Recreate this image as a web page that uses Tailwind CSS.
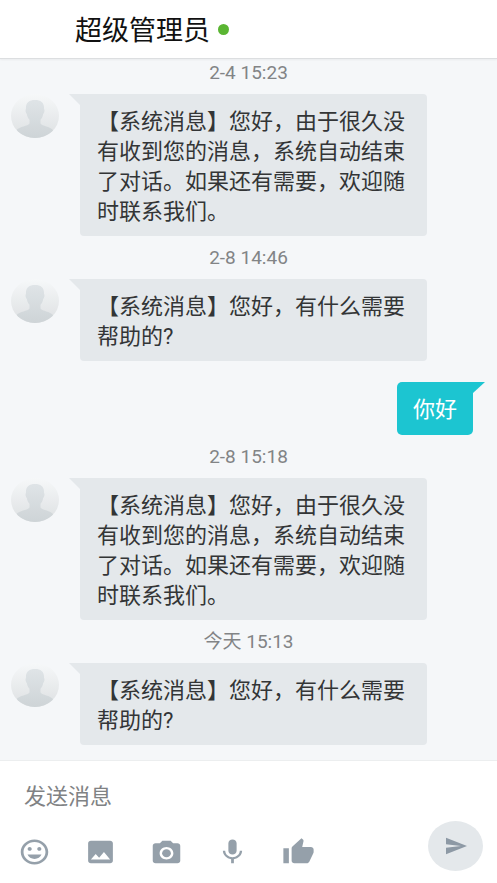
<!DOCTYPE html>
<html lang="zh-CN">
<head>
<meta charset="utf-8">
<meta name="viewport" content="width=device-width, initial-scale=1">
<title>超级管理员</title>
<script src="https://cdn.jsdelivr.net/npm/@tailwindcss/browser@4"></script>
</head>
<body class="flex min-h-screen flex-col bg-[#f5f7f9] font-['Roboto','Noto_Sans_CJK_SC',sans-serif] text-[22px] leading-[30px] text-[#333536]">
<svg class="absolute size-0" aria-hidden="true">
  <defs>
    <linearGradient id="disc" x1="0" y1="0" x2="0" y2="1"><stop offset="0" stop-color="#f6f8f9"/><stop offset="1" stop-color="#dde0e2"/></linearGradient>
    <linearGradient id="person" x1="0" y1="0" x2="0" y2="1"><stop offset="0" stop-color="#dfe4e7"/><stop offset="1" stop-color="#cdd3d6"/></linearGradient>
    <clipPath id="round"><ellipse cx="24" cy="22" rx="24" ry="22"/></clipPath>
  </defs>
  <symbol id="avatar" viewBox="0 0 48 44" preserveAspectRatio="none">
    <ellipse cx="24" cy="22" rx="24" ry="22" fill="url(#disc)"/>
    <path clip-path="url(#round)" fill="url(#person)" d="M24 6c6 0 9.500 3 9 9 .8.600.6 3.500-.8 5-.5 3-1.500 4.500-2.700 5.800v3.700c2 3 9 2.500 13 7V46H5v-9.500c4-4.500 11.500-4 13.500-7v-3.700c-1.200-1.300-2.200-2.800-2.700-5.800-1.400-1.500-1.600-4.400-.8-5-.5-6 3-9 9-9z"/>
  </symbol>
</svg>

<header class="flex h-[59px] items-center gap-2 border-b border-[#dcdee0] bg-white pl-[75px] shadow-xs">
  <h1 class="pt-1 text-[27px] leading-[40px] text-[#111]">超级管理员</h1>
  <span class="size-[11px] rounded-full bg-[#5ab532]" role="img" aria-label="在线"></span>
</header>

<main class="flex-1 pb-[14px]">
  <time class="mb-[7px] block text-center text-[19px] leading-[28px] text-[#828486]">2-4 15:23</time>
  <article class="flex items-start pr-[70px] pl-[11px]">
    <svg class="h-[44px] w-[48px] shrink-0" role="img" aria-label="头像"><use href="#avatar"/></svg>
    <svg class="ml-[10px] h-[11px] w-[11px] shrink-0" viewBox="0 0 11 11" aria-hidden="true"><path fill="#e4e8eb" d="M0 0h11v11z"/></svg>
    <p class="flex-1 rounded-[4px] rounded-tl-none bg-[#e4e8eb] px-[17px] pt-[13px] pb-[9px]">【系统消息】您好，由于很久没有收到您的消息，系统自动结束了对话。如果还有需要，欢迎随时联系我们。</p>
  </article>

  <time class="mt-2 mb-[7px] block text-center text-[19px] leading-[28px] text-[#828486]">2-8 14:46</time>
  <article class="flex items-start pr-[70px] pl-[11px]">
    <svg class="h-[44px] w-[48px] shrink-0" role="img" aria-label="头像"><use href="#avatar"/></svg>
    <svg class="ml-[10px] h-[11px] w-[11px] shrink-0" viewBox="0 0 11 11" aria-hidden="true"><path fill="#e4e8eb" d="M0 0h11v11z"/></svg>
    <p class="flex-1 rounded-[4px] rounded-tl-none bg-[#e4e8eb] px-[17px] pt-[13px] pb-[9px]">【系统消息】您好，有什么需要帮助的?</p>
  </article>

  <article class="mt-[21px] flex items-start justify-end pr-3">
    <p class="rounded-[5px] rounded-tr-none bg-[#1cc5d1] px-[16px] pt-[13px] pb-[10px] text-white">你好</p>
    <svg class="h-[11px] w-[12px] shrink-0" viewBox="0 0 12 11" preserveAspectRatio="none" aria-hidden="true"><path fill="#1cc5d1" d="M0 0h12L0 11z"/></svg>
  </article>

  <time class="mt-2 mb-[7px] block text-center text-[19px] leading-[28px] text-[#828486]">2-8 15:18</time>
  <article class="flex items-start pr-[70px] pl-[11px]">
    <svg class="h-[44px] w-[48px] shrink-0" role="img" aria-label="头像"><use href="#avatar"/></svg>
    <svg class="ml-[10px] h-[11px] w-[11px] shrink-0" viewBox="0 0 11 11" aria-hidden="true"><path fill="#e4e8eb" d="M0 0h11v11z"/></svg>
    <p class="flex-1 rounded-[4px] rounded-tl-none bg-[#e4e8eb] px-[17px] pt-[13px] pb-[9px]">【系统消息】您好，由于很久没有收到您的消息，系统自动结束了对话。如果还有需要，欢迎随时联系我们。</p>
  </article>

  <time class="mt-2 mb-[7px] block text-center text-[19px] leading-[28px] text-[#828486]">今天 15:13</time>
  <article class="flex items-start pr-[70px] pl-[11px]">
    <svg class="h-[44px] w-[48px] shrink-0" role="img" aria-label="头像"><use href="#avatar"/></svg>
    <svg class="ml-[10px] h-[11px] w-[11px] shrink-0" viewBox="0 0 11 11" aria-hidden="true"><path fill="#e4e8eb" d="M0 0h11v11z"/></svg>
    <p class="flex-1 rounded-[4px] rounded-tl-none bg-[#e4e8eb] px-[17px] pt-[13px] pb-[9px]">【系统消息】您好，有什么需要帮助的?</p>
  </article>
</main>

<form class="border-t border-[#eceeef] bg-white pt-[21px] pb-[12px]">
  <input class="block h-[30px] w-full px-6 outline-none placeholder:text-[#808284]" type="text" aria-label="发送消息" placeholder="发送消息">
  <div class="mt-[9px] flex items-center justify-between pr-[14px] pl-[18px]">
    <div class="mt-3 flex gap-[33px] text-[#95a0aa]">
      <button type="button" aria-label="表情"><svg class="h-[30px] w-[33px]" viewBox="0 0 24 24" preserveAspectRatio="none" fill="currentColor"><path d="M11.990 2C6.470 2 2 6.480 2 12s4.470 10 9.990 10C17.520 22 22 17.520 22 12S17.520 2 11.990 2zM12 20c-4.420 0-8-3.580-8-8s3.580-8 8-8 8 3.580 8 8-3.580 8-8 8zm3.500-9c.83 0 1.500-.67 1.500-1.500S16.330 8 15.500 8 14 8.670 14 9.500s.67 1.500 1.500 1.500zm-7 0c.83 0 1.500-.67 1.500-1.500S9.330 8 8.500 8 7 8.670 7 9.500 7.670 11 8.500 11zm3.500 6.500c2.330 0 4.310-1.460 5.110-3.500H6.890c.8 2.040 2.780 3.500 5.110 3.500z"/></svg></button>
      <button type="button" aria-label="图片"><svg class="h-[30px] w-[33px]" viewBox="0 0 24 24" preserveAspectRatio="none" fill="currentColor"><path d="M21 19V5c0-1.100-.9-2-2-2H5c-1.100 0-2 .9-2 2v14c0 1.100.9 2 2 2h14c1.100 0 2-.9 2-2zM8.500 13.500l2.500 3.010L14.500 12l4.500 6H5l3.500-4.500z"/></svg></button>
      <button type="button" aria-label="拍照"><svg class="h-[30px] w-[33px]" viewBox="0 0 24 24" preserveAspectRatio="none" fill="currentColor"><circle cx="12" cy="13" r="3.200"/><path fill-rule="evenodd" d="M9 3 7.170 5H4c-1.100 0-2 .9-2 2v12c0 1.100.9 2 2 2h16c1.100 0 2-.9 2-2V7c0-1.100-.9-2-2-2h-3.170L15 3H9zm3 15c-2.760 0-5-2.240-5-5s2.240-5 5-5 5 2.240 5 5-2.240 5-5 5z"/></svg></button>
      <button type="button" aria-label="语音"><svg class="h-[30px] w-[33px]" viewBox="0 0 24 24" preserveAspectRatio="none" fill="currentColor"><path d="M12 14c1.660 0 2.990-1.340 2.990-3L15 5c0-1.660-1.340-3-3-3S9 3.340 9 5v6c0 1.660 1.340 3 3 3zm5.300-3c0 3-2.540 5.100-5.300 5.100S6.700 14 6.700 11H5c0 3.410 2.720 6.230 6 6.720V21h2v-3.280c3.280-.48 6-3.300 6-6.720h-1.700z"/></svg></button>
      <button type="button" aria-label="点赞"><svg class="h-[30px] w-[33px]" viewBox="0 0 24 24" preserveAspectRatio="none" fill="currentColor"><path d="M1 21h4V9H1v12zm22-11c0-1.100-.9-2-2-2h-6.310l.95-4.570.03-.32c0-.41-.17-.79-.44-1.060L14.170 1 7.590 7.590C7.220 7.950 7 8.450 7 9v10c0 1.100.9 2 2 2h9c.83 0 1.540-.5 1.840-1.220l3.020-7.050c.09-.23.14-.47.14-.73v-2z"/></svg></button>
    </div>
    <button class="flex h-[50px] w-[55px] items-center justify-center rounded-[50%] bg-[#e4e8eb] text-[#8d99a5]" type="submit" aria-label="发送"><svg class="h-[22px] w-[24px]" viewBox="0 0 24 24" preserveAspectRatio="none" fill="currentColor"><path d="M2.010 21L23 12 2.010 3 2 10l15 2-15 2z"/></svg></button>
  </div>
</form>
</body>
</html>
